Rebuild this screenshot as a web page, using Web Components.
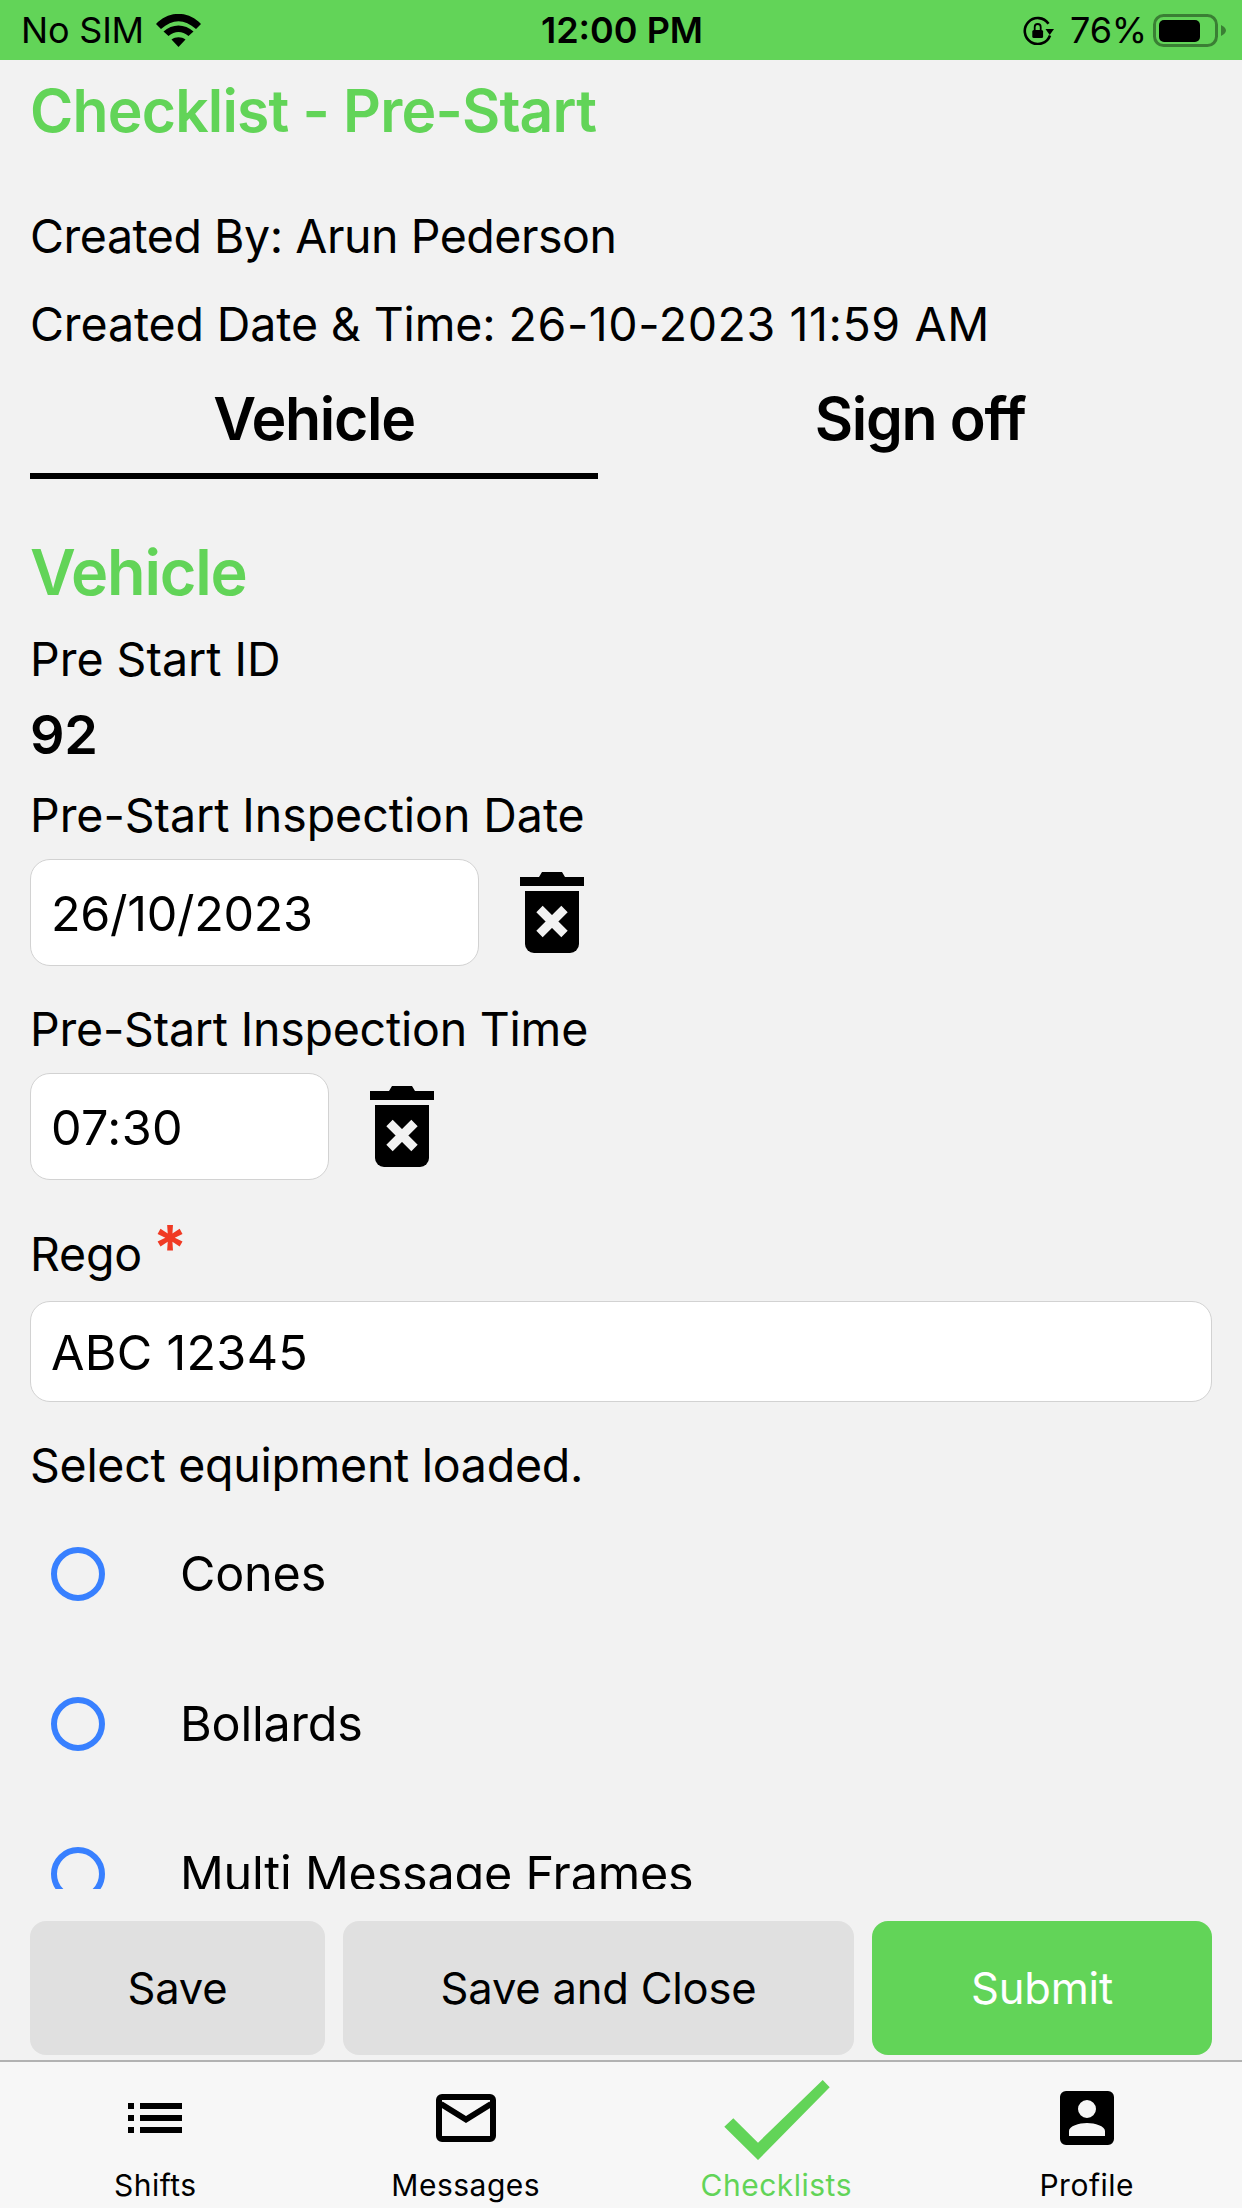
<!DOCTYPE html>
<html>
<head>
<meta charset="utf-8">
<title>Checklist - Pre-Start</title>
<style>
  html, body { margin: 0; padding: 0; height: 100%; }
  body { font-family: Inter, "Liberation Sans", sans-serif; color: #000; background: #f2f2f2; }
</style>
</head>
<body>
<checklist-app></checklist-app>

<script>
const GREEN = '#62d458';

class StatusBar extends HTMLElement {
    constructor() {
        super();
        this.attachShadow({ mode: 'open' }).innerHTML = `
            <style>
                :host { display: grid; grid-template-columns: 1fr auto 1fr; align-items: center; height: 60px; background: ${GREEN}; padding: 0 16px 0 21px; font-size: 36px; letter-spacing: -0.2px; }
                .left, .right { display: flex; align-items: center; }
                .left { gap: 12px; }
                .right { justify-content: flex-end; }
                .time { font-weight: 600; letter-spacing: 0; margin-right: 3px; }
                svg { display: block; }
                .pct { margin: 0 6px 0 15px; }
            </style>
            <div class="left">
                <span>No SIM</span>
                <svg width="45" height="33" viewBox="0 0 45 33">
                    <path d="M0 10 C13 -3.500 32 -3.500 45 10 L40 15 C28.500 4.500 16.500 4.500 5 15Z"/>
                    <path d="M7.500 17.500 C16 9.500 29 9.500 37.500 17.500 L32.500 22 C26 16.500 19 16.500 12.500 22Z"/>
                    <path d="M15.500 25.500 C19.500 22.500 25.500 22.500 29.500 25.500 L22.500 33Z"/>
                </svg>
            </div>
            <div class="time">12:00 PM</div>
            <div class="right">
                <svg width="32" height="30" viewBox="0 0 32 30">
                    <path d="M27 20.500 A13 13 0 1 1 25.500 8.700" fill="none" stroke="#000" stroke-width="2.600"/>
                    <path d="M22.500 14 H31 L26.700 20Z"/>
                    <rect x="9.300" y="15" width="10.800" height="8" rx="1.500"/>
                    <path d="M11.700 15 V12 A3 3 0 0 1 17.700 12 V15" fill="none" stroke="#000" stroke-width="1.800"/>
                </svg>
                <span class="pct">76%</span>
                <svg width="73" height="33" viewBox="0 0 73 33">
                    <rect x="1.500" y="1.500" width="62" height="30" rx="9" fill="none" stroke="#000" stroke-opacity="0.4" stroke-width="3"/>
                    <rect x="6" y="6" width="41" height="22" rx="5"/>
                    <path d="M68 11 C71 12.500 73 14.500 73 16.500 C73 18.500 71 20.500 68 22Z" fill-opacity="0.4"/>
                </svg>
            </div>
        `;
    }
}

class TabStrip extends HTMLElement {
    constructor() {
        super();
        this.attachShadow({ mode: 'open' }).innerHTML = `
            <style>
                :host { display: grid; grid-template-columns: 568px 1fr; column-gap: 30px; font-size: 59px; font-weight: 600; letter-spacing: -1.3px; }
                div { text-align: center; line-height: 60px; padding: 35px 0 30px; }
                .active { padding-bottom: 24px; border-bottom: 6px solid #000; }
            </style>
            <div class="active">Vehicle</div>
            <div>Sign off</div>
        `;
    }
}

class DateField extends HTMLElement {
    constructor() {
        super();
        const width = this.getAttribute('width') || '100%';
        const height = this.getAttribute('height') || '107';
        const clearable = this.hasAttribute('clearable');
        this.attachShadow({ mode: 'open' }).innerHTML = `
            <style>
                :host { display: flex; align-items: center; gap: 41px; }
                .box { box-sizing: border-box; width: ${width}; height: ${height}px; background: #fff; border: 1.5px solid #d2d2d2; border-radius: 20px; padding: 2px 0 0 20px; display: flex; align-items: center; font-size: 48.500px; letter-spacing: var(--field-spacing, -0.3px); }
                svg { display: block; }
            </style>
            <div class="box"><slot></slot></div>
            ${clearable ? `
            <svg width="64" height="81" viewBox="0 0 64 81">
                <path d="M0 5 H19 L22 0 H42 L45 5 H64 V14 H0Z"/>
                <path d="M5 19 H59 V72 A9 9 0 0 1 50 81 H14 A9 9 0 0 1 5 72Z"/>
                <path d="M19.500 37 L44.500 62 M44.500 37 L19.500 62" stroke="#f2f2f2" stroke-width="9"/>
            </svg>` : ''}
        `;
    }
}

class RadioRow extends HTMLElement {
    constructor() {
        super();
        this.attachShadow({ mode: 'open' }).innerHTML = `
            <style>
                :host { display: flex; align-items: center; height: 150px; padding-left: 21px; gap: 75px; font-size: 48.500px; letter-spacing: -0.2px; }
                i { box-sizing: border-box; width: 54px; height: 54px; margin-top: 2px; border: 6px solid #3880ff; border-radius: 50%; }
            </style>
            <i></i><span><slot></slot></span>
        `;
    }
}

class ActionBar extends HTMLElement {
    constructor() {
        super();
        this.attachShadow({ mode: 'open' }).innerHTML = `
            <style>
                :host { display: grid; grid-template-columns: 295px 511px 340px; column-gap: 18px; padding: 32px 30px 5px 30px; }
                div { height: 134px; border-radius: 16px; background: #e0e0e0; display: flex; align-items: center; justify-content: center; font-size: 43.500px; letter-spacing: -0.2px; }
                .primary { background: ${GREEN}; color: #fff; }
            </style>
            <div>Save</div>
            <div>Save and Close</div>
            <div class="primary">Submit</div>
        `;
    }
}

const TAB_ICONS = {
    list: `<path d="M28 25 H34 V31 H28Z M28 37 H34 V43 H28Z M28 49 H34 V55 H28Z M40 25 H82 V31 H40Z M40 37 H82 V43 H40Z M40 49 H82 V55 H40Z"/>`,
    mail: `<rect x="28" y="19" width="54" height="42" rx="3" fill="none" stroke="#000" stroke-width="6"/>
           <path d="M30 26 L55 41.500 L80 26" fill="none" stroke="#000" stroke-width="6"/>`,
    check: `<path fill="${GREEN}" d="M24.300 48.700 L33.300 40.300 L58 64.700 L122.700 2 L129.700 9.300 L58 82Z" transform="translate(-21 0)"/>`,
    person: `<path fill-rule="evenodd" d="M34 13 H76 A6 6 0 0 1 82 19 V61 A6 6 0 0 1 76 67 H34 A6 6 0 0 1 28 61 V19 A6 6 0 0 1 34 13Z M55 22 A9 9 0 1 0 55 40 A9 9 0 1 0 55 22Z M37 58 H73 V53 C73 48 63 45 55 45 C47 45 37 48 37 53Z"/>`
};

class TabItem extends HTMLElement {
    constructor() {
        super();
        const active = this.hasAttribute('active');
        this.attachShadow({ mode: 'open' }).innerHTML = `
            <style>
                :host { display: flex; flex-direction: column; align-items: center; font-size: 30px; letter-spacing: 0.5px; color: ${active ? GREEN : '#000'}; }
                svg { display: block; overflow: visible; }
                span { display: block; margin-top: 3px; line-height: 40px; }
            </style>
            <svg width="110" height="84" viewBox="0 0 110 84">${TAB_ICONS[this.getAttribute('icon')]}</svg>
            <span><slot></slot></span>
        `;
    }
}

class TabBar extends HTMLElement {
    constructor() {
        super();
        this.attachShadow({ mode: 'open' }).innerHTML = `
            <style>
                :host { display: grid; grid-template-columns: repeat(4, 1fr); box-sizing: border-box; height: 148px; padding-top: 16px; background: #f7f7f7; border-top: 2px solid #b2b2b2; }
            </style>
            <slot></slot>
        `;
    }
}

class ChecklistApp extends HTMLElement {
    constructor() {
        super();
        this.attachShadow({ mode: 'open' }).innerHTML = `
            <style>
                :host { display: flex; flex-direction: column; height: 2208px; width: 1242px; overflow: hidden; }
                main { height: 1829px; overflow: hidden; padding: 0 30px; box-sizing: border-box; font-size: 46.500px; letter-spacing: -0.2px; }
                p, h1, h2 { margin: 0; font-weight: 400; }
                p { line-height: 60px; }
                h1 { margin-top: 21px; margin-bottom: 65px; font-size: 58.800px; line-height: 60px; font-weight: 600; color: ${GREEN}; letter-spacing: -0.8px; }
                h2 { margin-top: 58px; font-size: 63px; line-height: 70px; font-weight: 600; color: ${GREEN}; letter-spacing: -1.2px; }
                .by { letter-spacing: -0.46px; }
                .when { margin-top: 28px; letter-spacing: -0.12px; }
                .when span { letter-spacing: 0.59px; }
                .idlabel { margin-top: 22px; letter-spacing: 0; }
                .idvalue { margin-top: 16px; font-size: 54px; font-weight: 600; }
                .datelabel { margin-top: 20px; letter-spacing: -0.05px; }
                .timelabel { margin-top: 33px; letter-spacing: -0.22px; }
                .regolabel { margin-top: 44px; }
                .selectlabel { margin-top: 33px; letter-spacing: -0.28px; }
                date-field { margin-top: 14px; }
                .rego { margin-top: 17px; --field-spacing: 0.3px; }
                .short { --field-spacing: 0.4px; }
                .req { color: #f03a24; font-weight: 700; font-size: 62px; vertical-align: 1px; line-height: 0; margin-left: -2px; }
                .first { margin-top: 3px; }
            </style>
            <status-bar></status-bar>
            <main>
                <h1>Checklist - Pre-Start</h1>
                <p class="by">Created By: Arun Pederson</p>
                <p class="when">Created Date &amp; Time: <span>26-10-2023 11:59 AM</span></p>
                <tab-strip></tab-strip>
                <h2>Vehicle</h2>
                <p class="idlabel">Pre Start ID</p>
                <p class="idvalue">92</p>
                <p class="datelabel">Pre-Start Inspection Date</p>
                <date-field width="449px" clearable>26/10/2023</date-field>
                <p class="timelabel">Pre-Start Inspection Time</p>
                <date-field class="short" width="299px" clearable>07:30</date-field>
                <p class="regolabel">Rego <span class="req">*</span></p>
                <date-field class="rego" height="101">ABC 12345</date-field>
                <p class="selectlabel">Select equipment loaded.</p>
                <radio-row class="first">Cones</radio-row>
                <radio-row>Bollards</radio-row>
                <radio-row>Multi Message Frames</radio-row>
            </main>
            <action-bar></action-bar>
            <tab-bar>
                <tab-item icon="list">Shifts</tab-item>
                <tab-item icon="mail">Messages</tab-item>
                <tab-item icon="check" active>Checklists</tab-item>
                <tab-item icon="person">Profile</tab-item>
            </tab-bar>
        `;
    }
}

customElements.define('status-bar', StatusBar);
customElements.define('tab-strip', TabStrip);
customElements.define('date-field', DateField);
customElements.define('radio-row', RadioRow);
customElements.define('action-bar', ActionBar);
customElements.define('tab-item', TabItem);
customElements.define('tab-bar', TabBar);
customElements.define('checklist-app', ChecklistApp);
</script>
</body>
</html>
